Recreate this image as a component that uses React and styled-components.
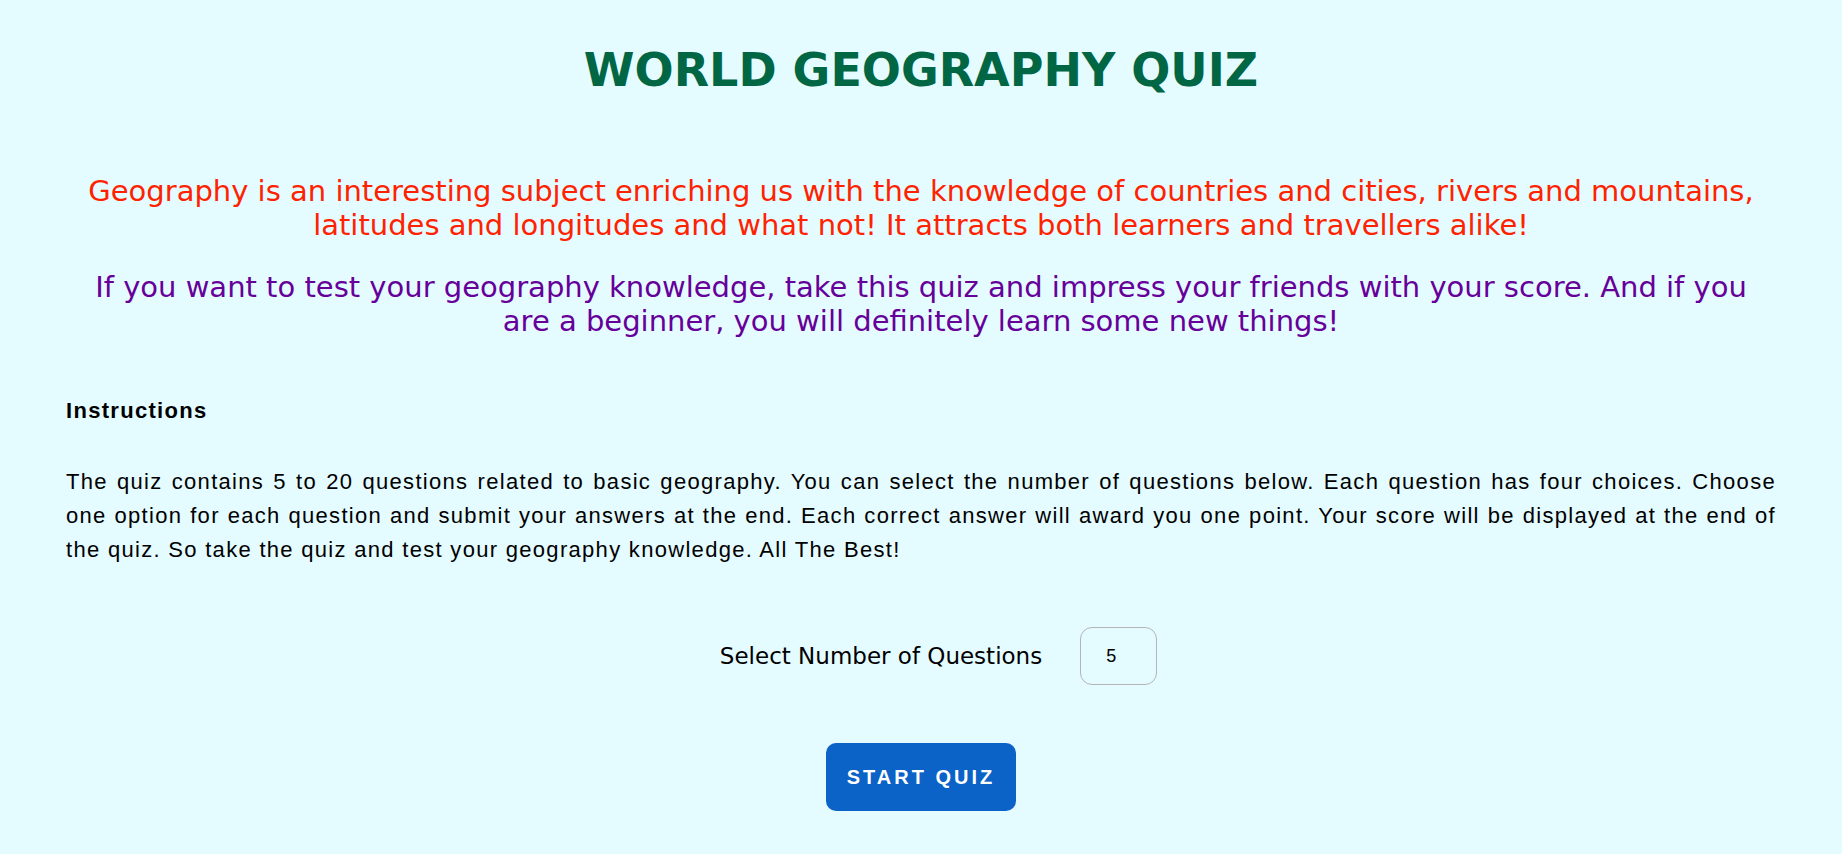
import React from "react";
import styled, { createGlobalStyle } from "styled-components";

const GlobalStyle = createGlobalStyle`
  html, body {
    margin: 0;
    padding: 0;
    background: #e4fbff;
  }
`;

const Page = styled.div`
  min-height: 854px;
  box-sizing: border-box;
  padding: 0 66px 40px;
  background: #e4fbff;
  font-family: "DejaVu Sans", Verdana, sans-serif;
`;

const Title = styled.h1`
  margin: 42px 0 0;
  font-size: 46px;
  line-height: 56px;
  font-weight: bold;
  text-align: center;
  color: #006644;
`;

const Intro = styled.p`
  margin: ${(p) => p.$top}px 0 0;
  padding: 0 15px;
  font-size: 29px;
  line-height: 34px;
  text-align: center;
  color: ${(p) => p.$color};
`;

const Heading = styled.h3`
  margin: 56px 0 0;
  font-family: "Liberation Sans", Arial, sans-serif;
  font-size: 22px;
  line-height: 34px;
  letter-spacing: 1.3px;
  font-weight: bold;
  color: #000;
`;

const Text = styled.p`
  margin: 37px 0 0;
  font-family: "Liberation Sans", Arial, sans-serif;
  font-size: 22px;
  line-height: 34px;
  letter-spacing: 1.3px;
  text-align: justify;
  color: #000;
`;

const SelectRow = styled.div`
  margin-top: 60px;
  padding-left: 35px;
  display: flex;
  justify-content: center;
  align-items: center;
  gap: 38px;
`;

const Label = styled.label`
  font-size: 23px;
  color: #000;
`;

const NumberInput = styled.input`
  box-sizing: border-box;
  width: 77px;
  height: 58px;
  padding: 0 0 0 25px;
  border: 1px solid #b5b5b5;
  border-radius: 12px;
  background: transparent;
  font-family: "Liberation Sans", Arial, sans-serif;
  font-size: 18px;
  color: #000;
  outline: none;
  -moz-appearance: textfield;

  &::-webkit-outer-spin-button,
  &::-webkit-inner-spin-button {
    -webkit-appearance: none;
    margin: 0;
  }
`;

const ButtonRow = styled.div`
  margin-top: 58px;
  display: flex;
  justify-content: center;
`;

const StartButton = styled.button`
  width: 190px;
  height: 68px;
  border: none;
  border-radius: 10px;
  background: #0b62c7;
  color: #fff;
  font-family: "Liberation Sans", Arial, sans-serif;
  font-size: 20px;
  font-weight: bold;
  letter-spacing: 3px;
  text-transform: uppercase;
  cursor: pointer;
`;

export default function App() {
  return (
    <>
      <GlobalStyle />
      <Page>
        <Title>WORLD GEOGRAPHY QUIZ</Title>
        <Intro $top={76} $color="#ff2200">
          Geography is an interesting subject enriching us with the knowledge of countries and cities, rivers and
          mountains, latitudes and longitudes and what not! It attracts both learners and travellers alike!
        </Intro>
        <Intro $top={28} $color="#660099">
          If you want to test your geography knowledge, take this quiz and impress your friends with your score. And
          if you are a beginner, you will definitely learn some new things!
        </Intro>
        <Heading>Instructions</Heading>
        <Text>
          The quiz contains 5 to 20 questions related to basic geography. You can select the number of questions
          below. Each question has four choices. Choose one option for each question and submit your answers at the
          end. Each correct answer will award you one point. Your score will be displayed at the end of the quiz. So
          take the quiz and test your geography knowledge. All The Best!
        </Text>
        <SelectRow>
          <Label htmlFor="count">Select Number of Questions</Label>
          <NumberInput id="count" type="number" min="5" max="20" defaultValue="5" />
        </SelectRow>
        <ButtonRow>
          <StartButton type="button">Start Quiz</StartButton>
        </ButtonRow>
      </Page>
    </>
  );
}
